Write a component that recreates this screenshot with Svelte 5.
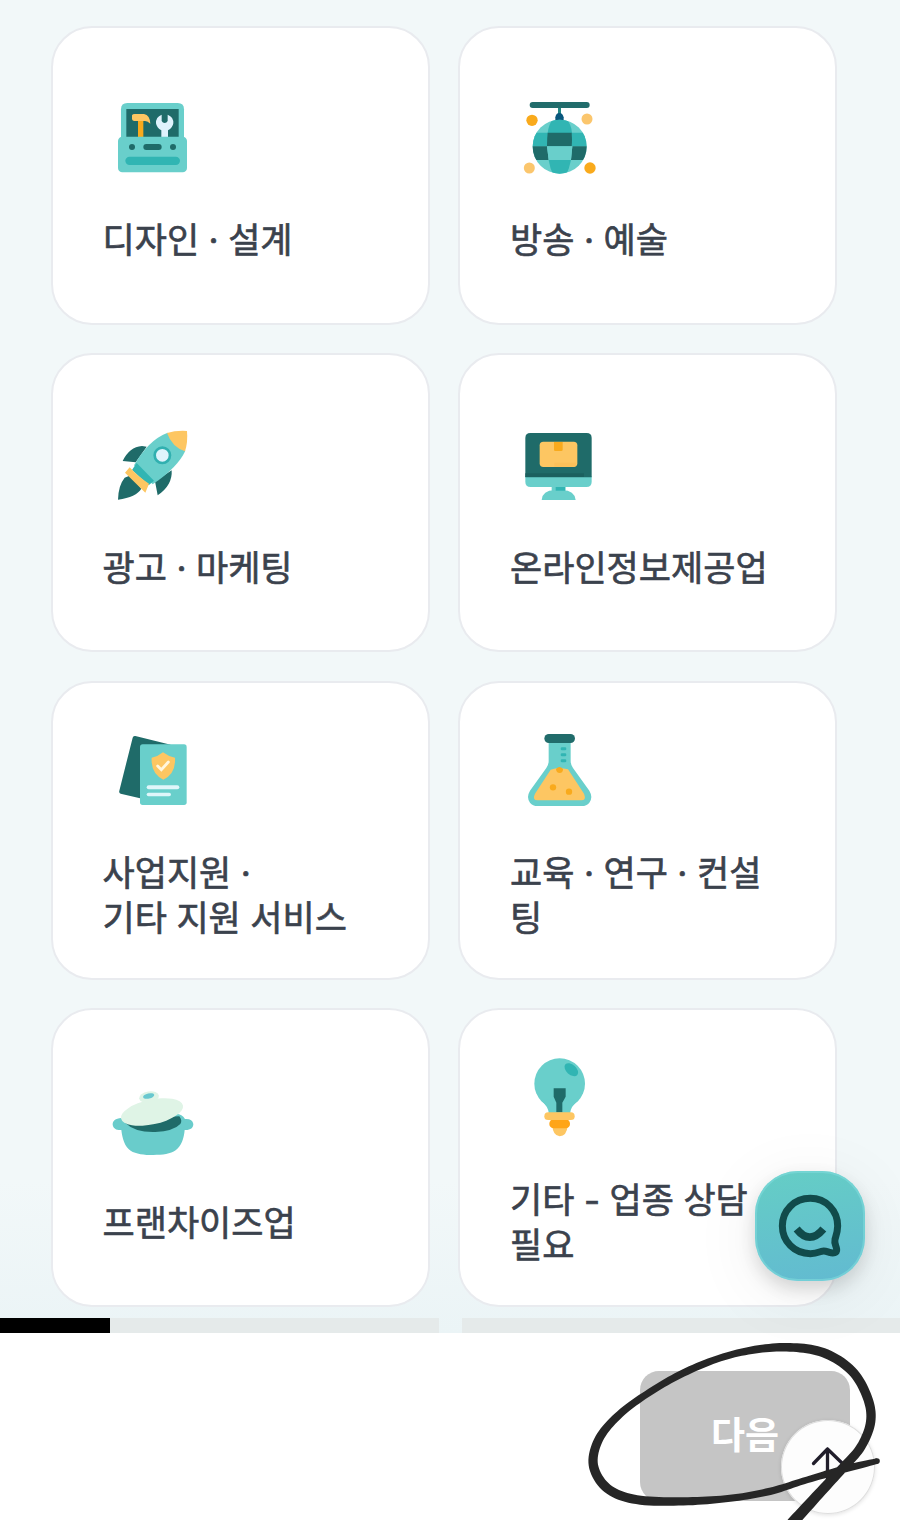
<script>
  const cards = [
    { icon: 'toolbox', box: '39 21 294 294', lines: ['디자인 · 설계'] },
    { icon: 'disco', box: '31 21 294 294', lines: ['방송 · 예술'] },
    { icon: 'rocket', box: '39 15 294 294', lines: ['광고 · 마케팅'] },
    { icon: 'monitor', box: '31 15 294 294', lines: ['온라인정보제공업'] },
    { icon: 'papers', box: '39 0 294 294', lines: ['사업지원 ·', '기타 지원 서비스'] },
    { icon: 'flask', box: '31 0 294 294', lines: ['교육 · 연구 · 컨설', '팅'] },
    { icon: 'pot', box: '39 0 294 294', lines: ['프랜차이즈업'] },
    { icon: 'bulb', box: '31 23 294 294', lines: ['기타 - 업종 상담', '필요'] }
  ];

  // Pen stroke: x, y and the width of the nib at each point.
  const pen = [
    [922, 453, 17], [820, 478, 22], [700, 513, 20], [600, 544, 22], [480, 565, 21],
    [340, 574, 25], [200, 569, 27], [112, 535, 28], [70, 465, 28], [88, 385, 26],
    [150, 312, 23], [240, 246, 21], [340, 189, 22], [450, 144, 21], [555, 119, 23],
    [660, 112, 26], [760, 128, 28], [845, 182, 28], [892, 262, 28], [902, 335, 28],
    [873, 410, 27], [820, 472, 28], [746, 552, 31], [660, 646, 34]
  ];

  function ribbon(points) {
    const left = [];
    const right = [];
    for (let i = 0; i < points.length - 1; i++) {
      const a = points[Math.max(i - 1, 0)];
      const b = points[i];
      const c = points[i + 1];
      const d = points[Math.min(i + 2, points.length - 1)];
      for (let s = 0; s < 10; s++) {
        const t = s / 10;
        const at = (k) =>
          0.5 * (2 * b[k] + (c[k] - a[k]) * t + (2 * a[k] - 5 * b[k] + 4 * c[k] - d[k]) * t * t + (3 * b[k] - a[k] - 3 * c[k] + d[k]) * t * t * t);
        const slope = (k) =>
          0.5 * (c[k] - a[k] + 2 * (2 * a[k] - 5 * b[k] + 4 * c[k] - d[k]) * t + 3 * (3 * b[k] - a[k] - 3 * c[k] + d[k]) * t * t);
        const dx = slope(0);
        const dy = slope(1);
        const len = Math.hypot(dx, dy) || 1;
        const w = at(2) / 2;
        left.push([at(0) - (dy / len) * w, at(1) + (dx / len) * w]);
        right.unshift([at(0) + (dy / len) * w, at(1) - (dx / len) * w]);
      }
    }
    return 'M' + [...left, ...right].map((p) => p[0].toFixed(1) + ' ' + p[1].toFixed(1)).join('L') + 'Z';
  }
  const loop = ribbon(pen);
</script>

<div class="screen">
  <main>
    {#each cards as card}
      <button class="card">
        <svg class="icon" viewBox={card.box}>
          {#if card.icon === 'toolbox'}
            <path d="M93 180V88q0-19 19-19H263q19 0 19 19V180Z" fill="#69cfcb" />
            <rect x="109" y="87" width="157" height="90" fill="#1f6b69" />
            <path d="M144 118h16v56h-16Z" fill="#f9aa1c" />
            <path d="M126 106q2-4 8-4h28q18 4 19 29q-9-10-19-8h-30q-6-1-6-6Z" fill="#fdc662" />
            <path d="M215 104q-18 7-17 26q2 14 16 21v26h20v-26q14-7 16-21q1-19-17-26v19q-3 6-9 6t-9-6Z" fill="#dff2fc" />
            <rect x="84" y="170" width="207" height="107" rx="13" fill="#69cfcb" />
            <circle cx="126" cy="201" r="9" fill="#1f6b69" />
            <circle cx="249" cy="201" r="9" fill="#1f6b69" />
            <rect x="160" y="192" width="55" height="18" rx="9" fill="#1f6b69" />
            <rect x="106" y="230" width="164" height="25" rx="12.5" fill="#31b5b3" />
          {:else if card.icon === 'disco'}
            <path d="M175 80h9v22h-9Z" fill="#238784" />
            <rect x="90" y="66" width="180" height="18" rx="9" fill="#216c6b" />
            <path d="M167 124v-12q2-13 12-13t13 13v12Z" fill="#08577d" />
            <clipPath id="ball"><circle cx="180" cy="200" r="81" /></clipPath>
            <g clip-path="url(#ball)">
              <path d="M95 115h170v170H95Z" fill="#69cfcb" />
              <path d="M95 158h170v41H95Z" fill="#31b5b3" />
              <path d="M159 118h42q14 16 16 41h-73q3-25 15-41Z" fill="#31b5b3" />
              <path d="M144 158h72q2 20 0 41h-74q0-22 2-41Z" fill="#1f6b69" />
              <path d="M95 199h47l5 41H95ZM218 199h47v41h-51Z" fill="#1f6b69" />
              <path d="M142 199h76l-4 41h-67Z" fill="#69cfcb" />
              <path d="M147 240h67q-5 25-14 43h-40q-9-18-13-43Z" fill="#31b5b3" />
            </g>
            <circle cx="97" cy="121" r="17" fill="#f9aa1c" />
            <circle cx="262" cy="117" r="16.500" fill="#fbc66d" />
            <circle cx="89" cy="264" r="16.500" fill="#fbc66d" />
            <circle cx="271" cy="264" r="17" fill="#f9aa1c" />
          {:else if card.icon === 'rocket'}
            <path d="M98 153q20-42 58-45l14 2-33 47ZM245 181q3 45-42 75l-8-42ZM84 269q1-43 20-66l18-7 32 40q-15 25-70 33Z" fill="#1f6b69" />
            <path d="M132 166Q175 90 233 68L286 122Q264 171 188 223Z" fill="#69cfcb" />
            <path d="M231 69Q258 61 291 63Q294 96 285 124Q246 111 231 69Z" fill="#fdc662" />
            <path d="M140 159l52 53-16 14-50-46Z" fill="#31b5b3" />
            <path d="M119 172q27 30 58 49l-11 27-61-60Z" fill="#fdc662" />
            <circle cx="217" cy="136" r="23" fill="#dff4fc" stroke="#31b0b0" stroke-width="8" />
          {:else if card.icon === 'monitor'}
            <path d="M156 222h42v21h-42Z" fill="#69cfcb" />
            <path d="M126 270q3-29 38-29h25q35 0 39 29Z" fill="#69cfcb" />
            <path d="M168 228h28v14h-28Z" fill="#31b5b3" />
            <path d="M77 199h199v16q0 16-16 16H93q-16 0-16-16Z" fill="#69cfcb" />
            <path d="M77 202V84q0-15 15-15H261q15 0 15 15V202Z" fill="#1f6b69" />
            <path d="M77 190h176v11H77Z" fill="#1b605f" />
            <rect x="120" y="95" width="113" height="76" rx="11" fill="#fdc662" />
            <path d="M163 96h26v23q0 4-4 4h-18q-4 0-4-4Z" fill="#f9aa1c" />
            <path d="M164 158h66q-1 12-8 12h-58Z" fill="#fbc05a" />
          {:else if card.icon === 'papers'}
            <path d="M136 48l106 26q-50 70-82 163l-68-16q-6-2-4-9L128 53q1-6 8-5Z" fill="#1f6b69" />
            <rect x="150" y="73" width="140" height="182" rx="8" fill="#69cfcb" />
            <path d="M219 97q15 12 36 16q3 48-35 66q-38-19-35-66q20-4 34-16Z" fill="#fdc662" />
            <path d="M203 138l11 11 21-23" fill="none" stroke="#fff6dd" stroke-width="8.500" stroke-linecap="round" />
            <rect x="170" y="196" width="98" height="12" rx="6" fill="#dff6fa" />
            <rect x="170" y="218" width="73" height="11" rx="5.500" fill="#dff6fa" />
          {:else if card.icon === 'flask'}
            <path d="M147 62h66v61q0 11 7 21l49 68q12 20 0 36q-8 10-23 10H114q-15 0-23-10q-12-16 0-36l49-68q7-10 7-21Z" fill="#69cfcb" />
            <path d="M153 149q25-8 52-1l48 73q8 20-8 20H114q-17-1-8-20Z" fill="#fdc662" />
            <path d="M169 147q10-12 21 0q0 12-10 12t-11-12Z" fill="#f9aa1c" />
            <circle cx="160" cy="202" r="9.500" fill="#f9aa1c" />
            <circle cx="208" cy="215" r="9.500" fill="#f9aa1c" />
            <rect x="183" y="82" width="17" height="9" rx="4" fill="#31b5b3" />
            <rect x="183" y="100" width="17" height="9" rx="4" fill="#31b5b3" />
            <rect x="183" y="118" width="17" height="9" rx="4" fill="#31b5b3" />
            <rect x="134" y="42" width="92" height="27" rx="13.500" fill="#216c6b" />
          {:else if card.icon === 'pot'}
            <path d="M94 144c-18 1-26 9-26 20c2 12 12 17 26 16c3 26 10 50 28 62c16 10 40 13 68 13s52-3 67-14c17-13 25-36 27-61c17 1 26-6 26-18c-2-11-10-16-25-15q-10-17-30-15Z" fill="#69cccb" />
            <path d="M105 158q30-15 163-19q10 13 3 23q-20 21-75 24q-60 2-91-28Z" fill="#1f6b69" />
            <ellipse cx="186" cy="126" rx="95" ry="37" transform="rotate(-12 186 126)" fill="#dff4e6" />
            <ellipse cx="177" cy="81" rx="30" ry="17" transform="rotate(-9 177 81)" fill="#dff4e6" />
            <ellipse cx="176" cy="78" rx="17" ry="8" transform="rotate(-12 176 78)" fill="#69c8cf" />
          {:else}
            <circle cx="180" cy="133" r="76" fill="#69cfcb" />
            <path d="M122 181h116q-26 20-27 42h-63q-2-22-26-42Z" fill="#69cfcb" />
            <ellipse cx="215" cy="91" rx="24" ry="15" transform="rotate(42 215 91)" fill="#31b5b3" />
            <path d="M162 147h36v25l-10 18v29h-18v-29l-8-18Z" fill="#1f6b69" />
            <path d="M158 260h46q-3 30-24 31q-20-2-22-31Z" fill="#fdc662" />
            <rect x="149" y="240" width="62" height="27" rx="13" fill="#ffa517" />
            <rect x="134" y="219" width="91" height="23" rx="11.500" fill="#fdc662" />
          {/if}
        </svg>
        <span class="label">
          {#each card.lines as line}<span class="line">{line}</span>{/each}
        </span>
      </button>
    {/each}
  </main>

  <div class="progress">
    <div class="track"><div class="done"></div></div>
    <div class="track"></div>
  </div>

  <footer>
    <button class="next">다음</button>
  </footer>

  <button class="chat" aria-label="채팅">
    <svg viewBox="75 93 330 330">
      <path d="M241 175c-49 0-84 37-84 83s36 83 84 83c14 0 25-4 34-7c9-3 16 1 23 3c12 4 23 2 22-9c-1-10-8-17-5-30c4-13 8-24 8-40c0-46-35-83-82-83Z" fill="none" stroke="#114b4b" stroke-width="21" stroke-linejoin="round" />
      <path d="M200 267q39 49 80 0" fill="none" stroke="#114b4b" stroke-width="23" />
    </svg>
  </button>

  <button class="top" aria-label="위로">
    <svg viewBox="0 0 94 94">
      <path d="M46.500 64V29M32.500 43.500l14-14.500 15 14.500" fill="none" stroke="#211e2b" stroke-width="3.300" stroke-linecap="round" stroke-linejoin="round" />
    </svg>
  </button>

  <svg class="scribble" viewBox="0 0 990 630">
    <path d={loop} fill="#262626" />
    <circle cx="921" cy="453" r="8.500" fill="#262626" />
  </svg>
</div>

<style>
  :global(body) { margin: 0; }
  * { box-sizing: border-box; }
  button { border: 0; padding: 0; font: inherit; color: inherit; }
  svg { display: block; }
  .screen {
    position: relative;
    width: 900px;
    height: 1520px;
    overflow: hidden;
    display: flex;
    flex-direction: column;
    background: linear-gradient(#f2f8f9 0, #f2f8f9 1180px, #ebf4f6 1333px);
    font-family: Inter, "Noto Sans CJK KR", sans-serif;
  }
  main {
    height: 1318px;
    padding: 25.500px 63px 0 50.500px;
    display: grid;
    grid-template-columns: 379px 379px;
    grid-auto-rows: 299px;
    align-content: start;
    gap: 28.600px 28.500px;
  }
  .card {
    display: flex;
    flex-direction: column;
    justify-content: center;
    align-items: flex-start;
    gap: 33px;
    padding-left: 50px;
    border: 2px solid #e9ebef;
    border-radius: 41px;
    background: #fff;
    text-align: left;
  }
  .icon { width: 98px; height: 98px; }
  .label {
    font-size: 35px;
    font-weight: 400;
    line-height: 45px;
    color: #3b424d;
    -webkit-text-stroke: 0.65px #3b424d;
    word-spacing: -0.35px;
    white-space: nowrap;
  }
  .line { display: block; }
  .progress {
    height: 15px;
    display: grid;
    grid-template-columns: 439px 438px;
    gap: 23px;
  }
  .track { background: #e5eaea; }
  .done { width: 110px; height: 100%; background: #000; }
  footer {
    flex: 1;
    display: flex;
    justify-content: flex-end;
    align-items: flex-start;
    padding: 38px 50px 0 0;
    background: #fff;
  }
  .next {
    width: 210px;
    height: 130px;
    border-radius: 19px;
    background: #c5c5c5;
    color: #fff;
    font-size: 37px;
    line-height: 46px;
    font-weight: 700;
  }
  .chat {
    position: absolute;
    left: 755px;
    top: 1171px;
    width: 110px;
    height: 110px;
    border-radius: 43px;
    background: linear-gradient(170deg, #65cec5, #62bad1);
    box-shadow: inset 0 0 0 2px rgba(125, 217, 218, .65), 0 8px 18px rgba(0, 0, 0, .14), 0 12px 70px rgba(0, 0, 0, .07);
  }
  .chat svg { width: 110px; height: 110px; }
  .top {
    position: absolute;
    left: 781px;
    top: 1420px;
    width: 94px;
    height: 94px;
    border-radius: 50%;
    background: #fdfdfd;
    box-shadow: inset 0 0 0 1px #dedede, 0 1px 4px rgba(0, 0, 0, .12);
  }
  .top svg { width: 94px; height: 94px; }
  .scribble {
    position: absolute;
    left: 570px;
    top: 1310px;
    width: 330px;
    height: 210px;
    pointer-events: none;
  }
</style>
